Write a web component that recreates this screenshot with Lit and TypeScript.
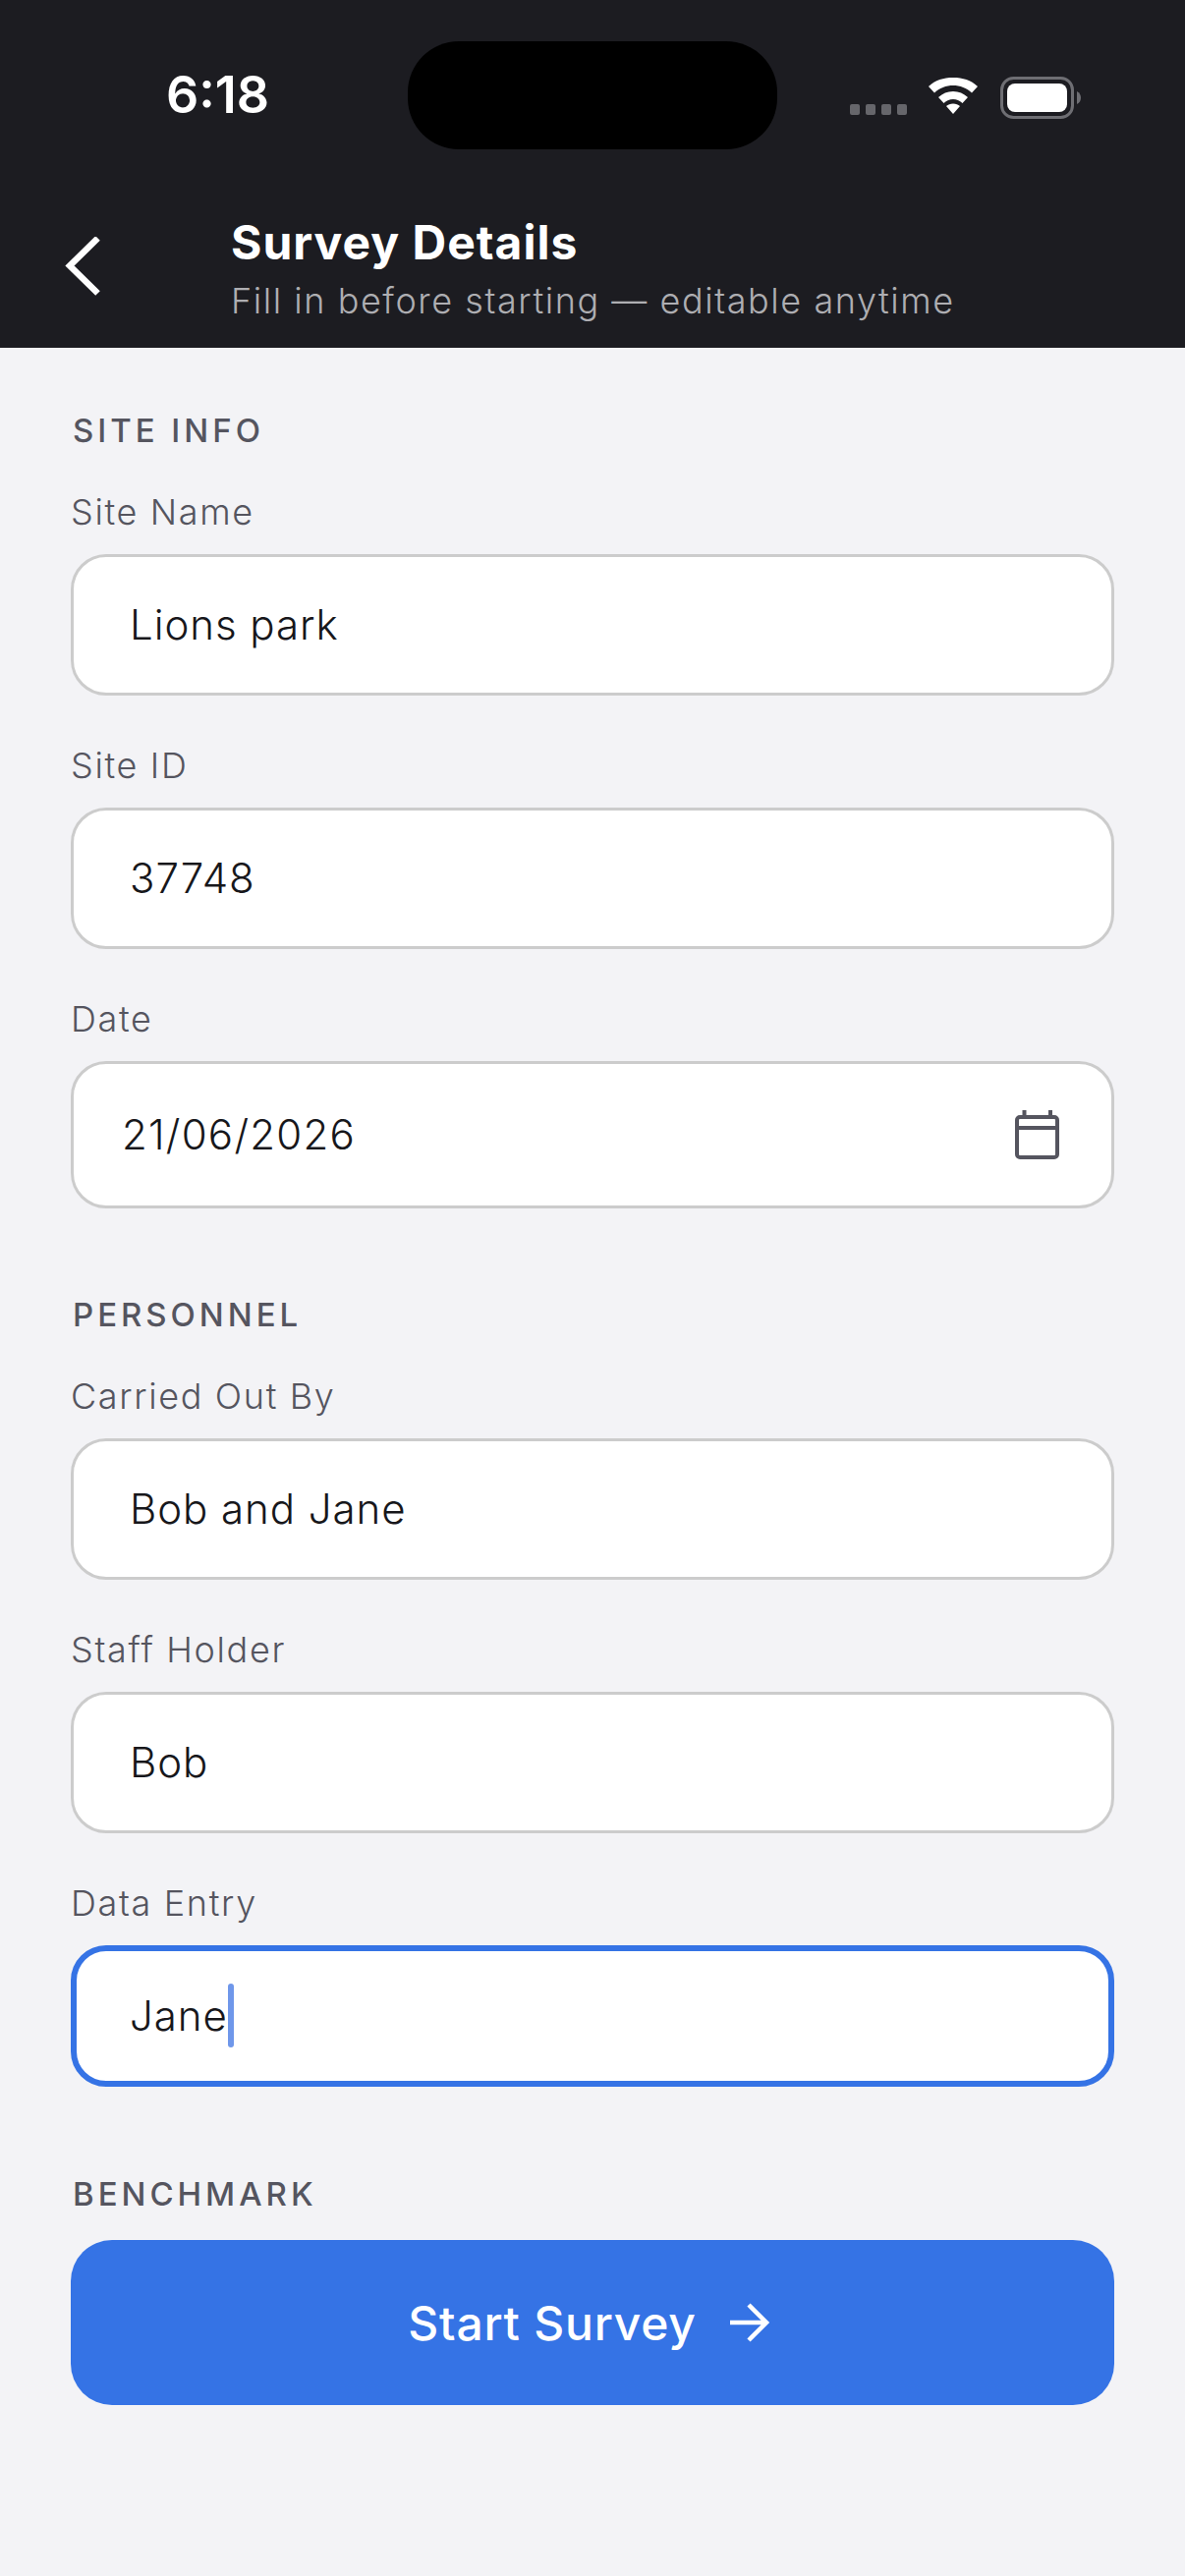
import { LitElement, html, css } from "lit";
import { customElement } from "lit/decorators.js";

@customElement("app-root")
export class AppRoot extends LitElement {
  static styles = css`
    :host {
      display: block;
      width: 1206px;
      height: 2622px;
      background: #f3f3f6;
      font-family: Inter, "Liberation Sans", sans-serif;
      color: #1c1c21;
      overflow: hidden;
    }
    .header {
      height: 354px;
      background: #1c1c21;
      box-sizing: border-box;
      padding-top: 42px;
    }
    .status {
      display: grid;
      grid-template-columns: 415px 376px 1fr;
      height: 110px;
    }
    .time {
      padding-left: 169px;
      padding-top: 25px;
      font-size: 52px;
      line-height: 60px;
      font-weight: 600;
      color: #fff;
    }
    .island {
      background: #000;
      border-radius: 52px;
    }
    .indicators {
      display: flex;
      align-items: flex-start;
      padding-left: 74px;
      padding-top: 36px;
    }
    .nav {
      display: flex;
      align-items: flex-start;
      padding: 65px 0 0 63px;
    }
    .back {
      width: 44px;
      height: 60px;
      margin-top: 24px;
      margin-right: 128px;
      flex: none;
    }
    .title {
      font-size: 48px;
      line-height: 60px;
      font-weight: 700;
      letter-spacing: 1px;
      color: #fff;
    }
    .subtitle {
      font-size: 36px;
      line-height: 44px;
      font-weight: 300;
      letter-spacing: 1.56px;
      color: #aeaeb2;
      margin-top: 7px;
    }
    .main {
      padding: 64px 72px 0 72px;
    }
    .section {
      font-size: 33px;
      line-height: 40px;
      font-weight: 500;
      letter-spacing: 3.96px;
      color: #55555f;
      padding-left: 2px;
    }
    .section.next {
      margin-top: 88px;
    }
    .section.last {
      margin-top: 89px;
    }
    .field {
      margin-top: 49px;
    }
    .section + .field {
      margin-top: 41px;
    }
    .label {
      font-size: 36px;
      line-height: 44px;
      font-weight: 300;
      letter-spacing: 1.65px;
      color: #55555f;
      margin-bottom: 21px;
    }
    .input {
      box-sizing: border-box;
      height: 144px;
      display: flex;
      align-items: center;
      padding: 0 53px 2px 57px;
      background: #fff;
      border: 3px solid #ccc;
      border-radius: 36px;
      font-size: 42px;
      font-weight: 350;
      letter-spacing: 0.95px;
      color: #17171b;
    }
    .input.date {
      height: 150px;
      padding-left: 49px;
      padding-bottom: 1px;
      letter-spacing: 1.25px;
      justify-content: space-between;
    }
    .input.focus {
      border: 6px solid #3573e5;
      padding-left: 54px;
    }
    .caret {
      display: inline-block;
      width: 6px;
      height: 65px;
      border-radius: 3px;
      background: #6f97ea;
      flex: none;
    }
    .cal {
      width: 45px;
      height: 50px;
      flex: none;
    }
    .start {
      margin-top: 27px;
      height: 168px;
      border-radius: 42px;
      background: #3573e5;
      color: #fff;
      display: flex;
      align-items: center;
      justify-content: center;
      gap: 28px;
      font-size: 48px;
      font-weight: 500;
      letter-spacing: 0.78px;
    }
    .arrow {
      width: 54px;
      height: 42px;
      flex: none;
    }
  `;

  private field(label: string, value: string) {
    return html`<div class="field">
      <div class="label">${label}</div>
      <div class="input">${value}</div>
    </div>`;
  }

  render() {
    return html`
      <div class="header">
        <div class="status">
          <div class="time">6:18</div>
          <div class="island"></div>
          <div class="indicators">
            <svg width="240" height="44" viewBox="0 0 240 44">
              <g fill="#66666b">
                <rect x="0" y="28" width="10" height="11" rx="2"></rect>
                <rect x="16" y="28" width="10" height="11" rx="2"></rect>
                <rect x="32" y="28" width="10" height="11" rx="2"></rect>
                <rect x="48" y="28" width="10" height="11" rx="2"></rect>
              </g>
              <path
                fill="#fff"
                d="M80 10 C87 3.5 95 1 105 1 C115 1 123 3.5 130 10 L124 16.5 C119 11.5 112 9 105 9 C98 9 91 11.5 86 16.5 Z M90 21 C94.5 17 99 15 105 15 C111 15 115.5 17 120 21 L114.5 27 C111.5 24.5 108.5 23 105 23 C101.500 23 98.500 24.500 95.500 27 Z M98 30 C100 28.500 102 27.500 105 27.500 C108 27.500 110 28.500 112 30 L105 38 Z"
              ></path>
              <rect x="154.500" y="1.500" width="72" height="40" rx="12" fill="none" stroke="#6e6e73" stroke-width="3"></rect>
              <rect x="160" y="7" width="61" height="29" rx="8" fill="#fff"></rect>
              <path fill="#6e6e73" d="M231 15 C234 16.500 235 19 235 21.500 C235 24 234 26.500 231 28 Z"></path>
            </svg>
          </div>
        </div>
        <div class="nav">
          <svg class="back" viewBox="0 0 44 60">
            <path d="M36.500 1.500 L8 29.500 L36.500 57.500" fill="none" stroke="#fff" stroke-width="6.500"></path>
          </svg>
          <div>
            <div class="title">Survey Details</div>
            <div class="subtitle">Fill in before starting — editable anytime</div>
          </div>
        </div>
      </div>
      <div class="main">
        <div class="section">SITE INFO</div>
        ${this.field("Site Name", "Lions park")} ${this.field("Site ID", "37748")}
        <div class="field">
          <div class="label">Date</div>
          <div class="input date">
            <span>21/06/2026</span>
            <svg class="cal" viewBox="0 0 45 50">
              <g fill="none" stroke="#55555f" stroke-width="4">
                <rect x="2" y="7" width="41" height="41" rx="3"></rect>
                <path d="M2 18 H43 M9.500 0 V7 M36 0 V7"></path>
              </g>
            </svg>
          </div>
        </div>
        <div class="section next">PERSONNEL</div>
        ${this.field("Carried Out By", "Bob and Jane")} ${this.field("Staff Holder", "Bob")}
        <div class="field">
          <div class="label">Data Entry</div>
          <div class="input focus"><span>Jane</span><span class="caret"></span></div>
        </div>
        <div class="section last">BENCHMARK</div>
        <div class="start">
          <span>Start Survey</span>
          <svg class="arrow" viewBox="0 0 54 42">
            <path d="M6 21 H43 M25 3 L43 21 L25 39" fill="none" stroke="#fff" stroke-width="4.500"></path>
          </svg>
        </div>
      </div>
    `;
  }
}
